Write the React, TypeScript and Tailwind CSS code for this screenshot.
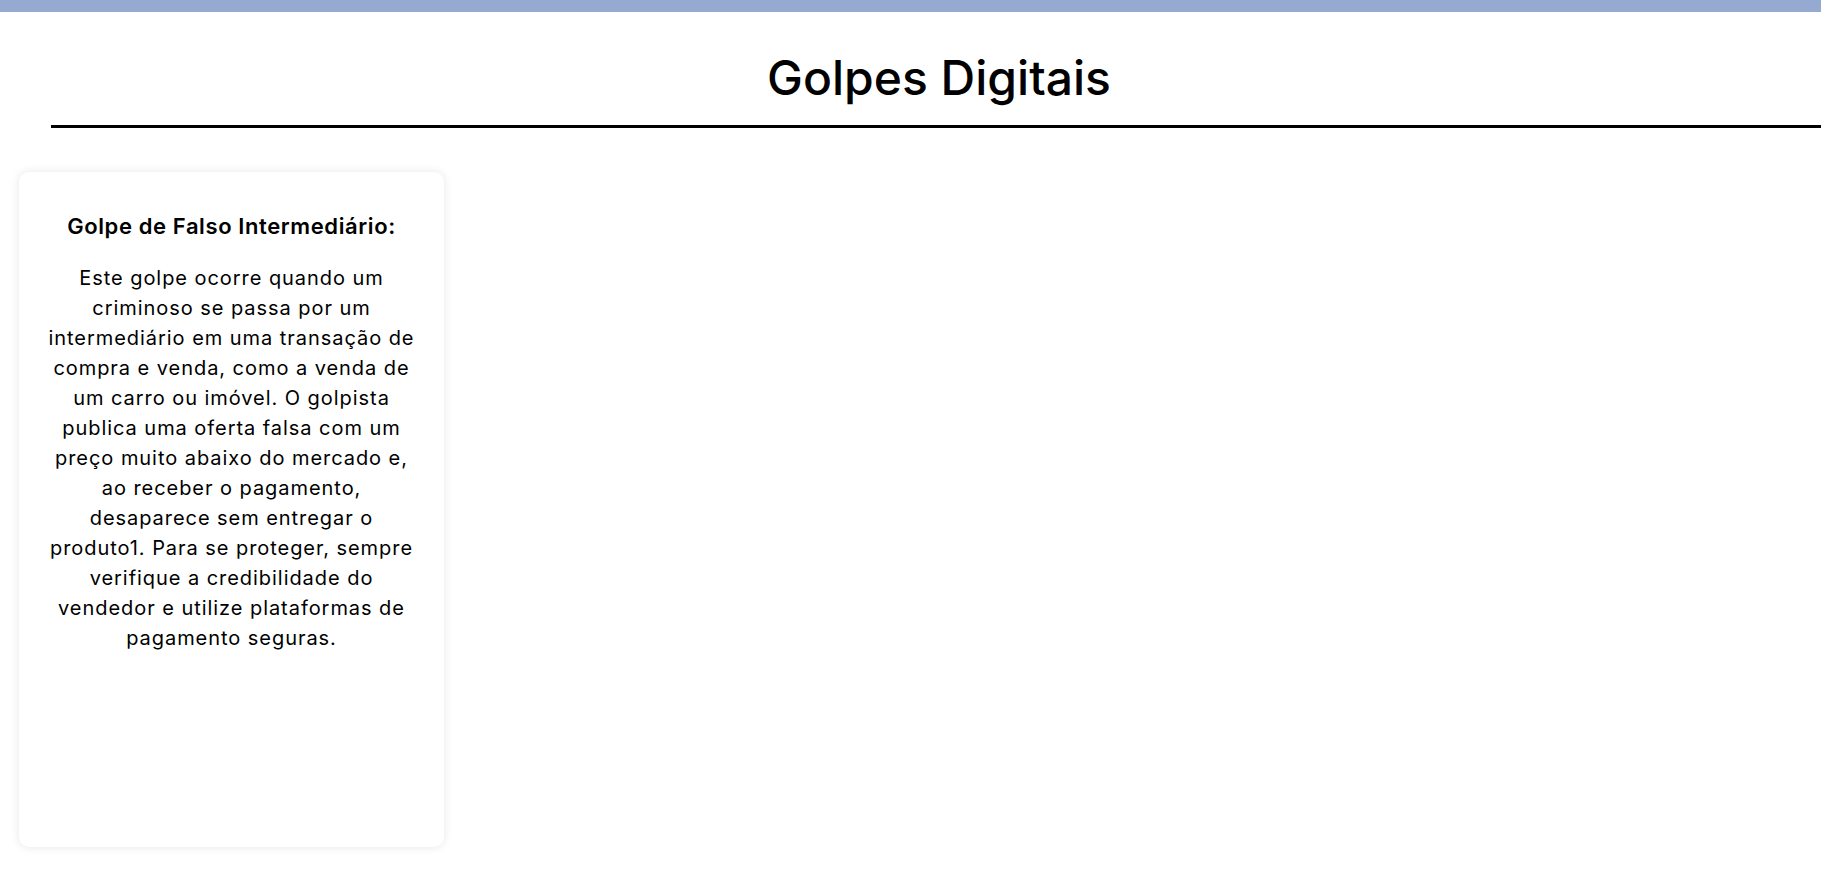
import React from "react";

const lines = [
  "Este golpe ocorre quando um",
  "criminoso se passa por um",
  "intermediário em uma transação de",
  "compra e venda, como a venda de",
  "um carro ou imóvel. O golpista",
  "publica uma oferta falsa com um",
  "preço muito abaixo do mercado e,",
  "ao receber o pagamento,",
  "desaparece sem entregar o",
  "produto1. Para se proteger, sempre",
  "verifique a credibilidade do",
  "vendedor e utilize plataformas de",
  "pagamento seguras.",
];

export default function App() {
  return (
    <div
      className="min-h-[887px] w-[1821px] overflow-hidden bg-white text-black"
      style={{ fontFamily: "Inter, 'Open Sans', sans-serif" }}
    >
      <div className="h-[12px] bg-[#95a9d1]" />
      <header className="ml-[51px] w-[1776px] pt-[35.5px]">
        <h1 className="text-center text-[48px] leading-[60px] font-medium">
          Golpes Digitais
        </h1>
      </header>
      <div className="ml-[51px] mt-[17.5px] h-[3px] w-[1800px] bg-black" />
      <main className="mt-[44px] flex pl-[19px]">
        <section className="h-[675px] w-[425px] rounded-[10px] bg-white px-[10px] pt-[39px] text-center shadow-[0_0_10px_rgba(0,0,0,0.1)]">
          <h3 className="text-[22px] leading-[30px] font-semibold tracking-[0.6px]">
            Golpe de Falso Intermediário:
          </h3>
          <p className="mt-[21.7px] text-[20px] leading-[30px] tracking-[0.95px]">
            {lines.map((l) => (
              <span key={l} className="block whitespace-nowrap">
                {l}
              </span>
            ))}
          </p>
        </section>
      </main>
    </div>
  );
}
